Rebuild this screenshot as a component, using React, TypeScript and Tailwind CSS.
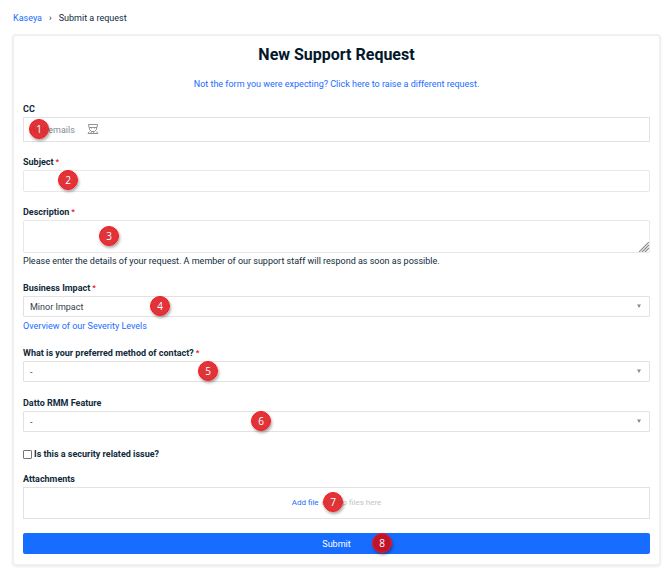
import type { ReactNode } from "react";

interface BadgeProps {
  n: number;
  className: string;
}

// Numbered callout that floats over a field
function Badge({ n, className }: BadgeProps) {
  return (
    <span
      className={`pointer-events-none absolute top-1/2 -mt-px flex size-5 -translate-y-1/2 items-center justify-center rounded-full border border-[#fa1418] font-['Open_Sans',sans-serif] text-[10px] leading-none text-white shadow-[1px_2px_3px_rgba(0,0,0,0.35)] ${className}`}
    >
      {n}
    </span>
  );
}

interface FieldProps {
  id: string;
  label: string;
  required?: boolean;
  hint?: ReactNode;
  children: ReactNode;
}

function Field({ id, label, required, hint, children }: FieldProps) {
  return (
    <div className="mt-3">
      <label htmlFor={id} className="flex gap-0.5 font-bold">
        {label}
        {required && <span className="text-[8px] text-[#f01818]">*</span>}
      </label>
      <div className="relative flex">{children}</div>
      {hint}
    </div>
  );
}

interface SelectBoxProps {
  id: string;
  value: string;
}

function SelectBox({ id, value }: SelectBoxProps) {
  return (
    <>
      <select
        id={id}
        defaultValue={value}
        className="h-[21px] w-full appearance-none rounded-[1px] border border-[#e2e2e2] bg-white px-1.5 text-[#333f48]"
      >
        <option value={value}>{value}</option>
      </select>
      <svg
        viewBox="0 0 4 4"
        className="pointer-events-none absolute top-2 right-[9px] size-1 fill-[#888]"
      >
        <path d="M0 0.5h4L2 4z" />
      </svg>
    </>
  );
}

function AgentIcon() {
  return (
    <svg
      viewBox="0 0 24 24"
      className="pointer-events-none absolute top-1.5 left-16 size-3 text-[#7f8a90]"
      fill="none"
      stroke="currentColor"
      strokeWidth="1.8"
      strokeLinejoin="round"
    >
      <path d="M3 3h18l-1 6H4z" />
      <path d="M5 9v4l4 4h6l4-4V9M9 11v1M15 11v1" />
      <path d="M5 17l-3 4h20l-3-4M9 17l-1 4M12 21l3-4" />
    </svg>
  );
}

export default function App() {
  return (
    <div className="bg-white pt-2.5 pr-[9px] pb-2 pl-3 font-[Roboto,sans-serif] text-[9px] leading-4 text-[#0f2a3a]">
      <nav className="flex gap-[7px] pl-px">
        <a href="#" className="text-[#1a6dff]">
          Kaseya
        </a>
        <span>›</span>
        <span>Submit a request</span>
      </nav>

      <form className="mt-2 rounded-[4px] border-2 border-[#f0f0f0] px-[9px] pb-2.5 shadow-[0_1px_2px_rgba(0,0,0,0.08)]">
        <h1 className="pt-[9px] text-center text-base leading-5 font-bold text-[#03182a]">
          New Support Request
        </h1>
        <p className="mt-[11px] text-center">
          <a href="#" className="text-[#1a6dff]">
            Not the form you were expecting? Click here to raise a different request.
          </a>
        </p>

        <div className="-mt-[3px]">
          <Field id="cc" label="CC">
            <input
              id="cc"
              type="text"
              placeholder="Add emails"
              className="h-[25px] w-full border border-[#e2e2e2] px-1.5 placeholder:text-[#7f8a90]"
            />
            <AgentIcon />
            <Badge n={1} className="left-1.5 bg-[#dc1e23]/90" />
          </Field>

          <Field id="subject" label="Subject" required>
            <input
              id="subject"
              type="text"
              className="h-[22px] w-full rounded-[2px] border border-[#e8e8e8] px-1.5"
            />
            <Badge n={2} className="left-[35px] bg-[#dc1e23]/90" />
          </Field>

          <Field
            id="description"
            label="Description"
            required
            hint={
              <p className="pt-0.5 leading-[13px]">
                Please enter the details of your request. A member of our support staff will respond
                as soon as possible.
              </p>
            }
          >
            <textarea
              id="description"
              className="h-[33px] w-full resize-none rounded-[2px] border border-[#e8e8e8] px-1.5"
            />
            <svg
              viewBox="0 0 10 10"
              className="pointer-events-none absolute right-px bottom-px size-2.5"
              stroke="#8a8a8a"
              strokeWidth="1.2"
            >
              <path d="M0 10L10 0M3 10L10 3M6 10L10 6" />
            </svg>
            <Badge n={3} className="left-[76px] bg-[#dc1e23]/90" />
          </Field>

          <Field
            id="impact"
            label="Business Impact"
            required
            hint={
              <a href="#" className="block pt-[3px] leading-[13px] text-[#1a6dff]">
                Overview of our Severity Levels
              </a>
            }
          >
            <SelectBox id="impact" value="Minor Impact" />
            <Badge n={4} className="left-[127px] bg-[#dc1e23]/90" />
          </Field>

          <Field id="contact" label="What is your preferred method of contact?" required>
            <SelectBox id="contact" value="-" />
            <Badge n={5} className="left-[175px] bg-[#dc1e23]/90" />
          </Field>

          <div className="pt-px">
            <Field id="feature" label="Datto RMM Feature">
              <SelectBox id="feature" value="-" />
              <Badge n={6} className="left-[228px] bg-[#dc1e23]/90" />
            </Field>
          </div>
        </div>

        <label className="mt-3.5 flex items-center gap-0.5 font-bold">
          <input
            type="checkbox"
            className="size-[9px] appearance-none rounded-[1px] border border-[#767676] bg-white checked:bg-[#1a6dff]"
          />
          Is this a security related issue?
        </label>

        <div className="mt-[9px]">
          <label htmlFor="files" className="block font-bold">
            Attachments
          </label>
          <div className="relative flex h-8 items-center justify-center gap-[3px] border border-[#e2e2e2] text-[8px] text-[#c4c4c4]">
            <label htmlFor="files" className="cursor-pointer text-[#1a6dff]">
              Add file
            </label>
            <span>or drop files here</span>
            <input id="files" type="file" className="sr-only" />
            <Badge n={7} className="left-[299px] bg-[#dc1e23]/90" />
          </div>
        </div>

        <div className="relative mt-3.5">
          <button
            type="submit"
            className="block h-[21px] w-full rounded-[2px] bg-[#176dff] text-white"
          >
            Submit
          </button>
          <Badge n={8} className="left-[349px] bg-[#c0142d]" />
        </div>
      </form>
    </div>
  );
}
